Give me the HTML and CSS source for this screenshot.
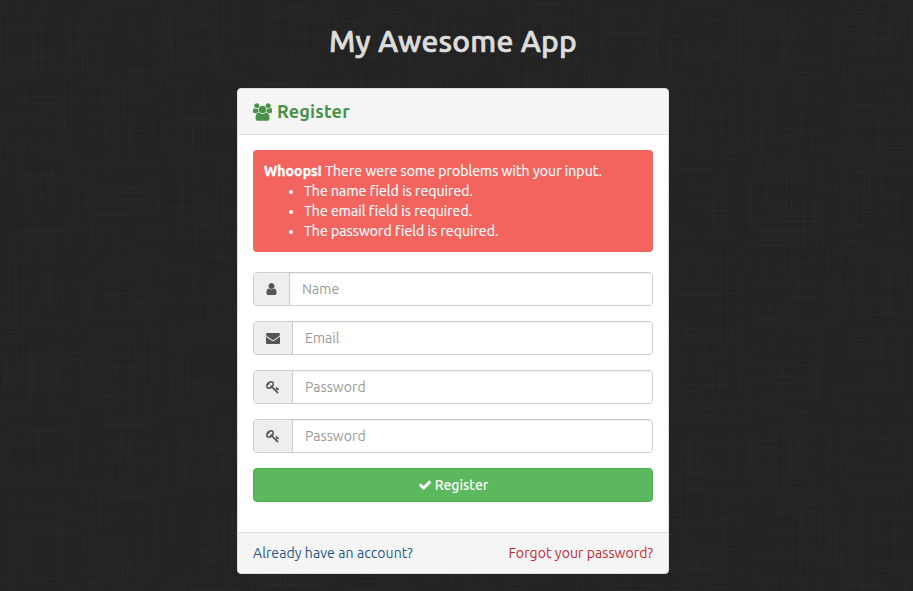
FILE: index.html
```html
<!DOCTYPE html>
<html lang="en">
<head>
<meta charset="utf-8">
<title>My Awesome App</title>
<link rel="stylesheet" href="styles.css">
</head>
<body>
<svg class="texture" aria-hidden="true">
  <filter id="warp" x="0" y="0" width="100%" height="100%" color-interpolation-filters="sRGB">
    <feTurbulence type="fractalNoise" baseFrequency="0.45 0.012" numOctaves="3" seed="4"/>
    <feColorMatrix values="0 0 0 0 1  0 0 0 0 1  0 0 0 0 1  .38 0 0 0 -.16"/>
  </filter>
  <filter id="weft" x="0" y="0" width="100%" height="100%" color-interpolation-filters="sRGB">
    <feTurbulence type="fractalNoise" baseFrequency="0.012 0.45" numOctaves="3" seed="9"/>
    <feColorMatrix values="0 0 0 0 1  0 0 0 0 1  0 0 0 0 1  .38 0 0 0 -.16"/>
  </filter>
  <rect width="100%" height="100%" filter="url(#warp)"/>
  <rect width="100%" height="100%" filter="url(#weft)"/>
</svg>
<svg class="defs" aria-hidden="true">
  <symbol id="users" viewBox="0 0 1920 1792"><path d="M593 896q-162 5-265 128h-134q-82 0-138-40.500t-56-118.500q0-353 124-353 6 0 43.500 21t97.500 42.500 119 21.500q67 0 133-23-5 37-5 66 0 159 93 295zm1071 637q0 120-73 189.500t-194 69.500h-874q-121 0-194-69.500t-73-189.500q0-53 3.500-103.500t14-109 26.500-108.500 43-97.500 62-81 85.500-53.500 111.500-20q10 0 43 21.500t73 48 107 48 135 21.500 135-21.500 107-48 73-48 43-21.500q61 0 111.500 20t85.500 53.500 62 81 43 97.500 26.500 108.500 14 109 3.500 103.500zm-1024-1277q0 106-75 181t-181 75-181-75-75-181 75-181 181-75 181 75 75 181zm704 384q0 159-112.500 271.500t-271.500 112.500-271.500-112.500-112.500-271.500 112.500-271.500 271.500-112.500 271.500 112.500 112.500 271.500zm576 225q0 78-56 118.500t-138 40.500h-134q-103-123-265-128 93-136 93-295 0-29-5-66 66 23 133 23 59 0 119-21.500t97.500-42.500 43.500-21q124 0 124 353zm-128-609q0 106-75 181t-181 75-181-75-75-181 75-181 181-75 181 75 75 181z"/></symbol>
  <symbol id="user" viewBox="256 0 1280 1792"><path d="M1536 1399q0 109-62.500 187t-150.500 78h-854q-88 0-150.500-78t-62.500-187q0-85 8.500-160.500t31.500-152 58.500-131 94-89 134.500-34.500q131 128 313 128t313-128q76 0 134.500 34.500t94 89 58.500 131 31.500 152 8.500 160.500zm-256-887q0 159-112.500 271.500t-271.500 112.500-271.500-112.500-112.500-271.500 112.500-271.500 271.500-112.500 271.500 112.500 112.500 271.500z"/></symbol>
  <symbol id="envelope" viewBox="0 0 1792 1792"><path d="M1792 710v794q0 66-47 113t-113 47h-1472q-66 0-113-47t-47-113v-794q44 49 101 87 362 246 497 345 57 42 92.500 65.500t94.500 48 110 24.500h2q51 0 110-24.500t94.500-48 92.500-65.500q170-123 498-345 57-39 100-87zm0-294q0 79-49 151t-122 123q-376 261-468 325-10 7-42.500 31t-54 38.500-52 32.500-57.500 27-50 9h-2q-23 0-50-9t-57.500-27-52-32.500-54-38.500-42.500-31q-91-64-262-182.500t-205-142.500q-62-42-117-115.500t-55-136.500q0-78 41.500-130t118.500-52h1472q65 0 112.500 47t47.500 113z"/></symbol>
  <symbol id="key" viewBox="0 0 1792 1792"><path d="M832 512q0-80-56-136t-136-56-136 56-56 136q0 42 19 83-41-19-83-19-80 0-136 56t-56 136 56 136 136 56 136-56 56-136q0-42-19-83 41 19 83 19 80 0 136-56t56-136zm851 704q0 17-49 66t-66 49q-9 0-28.500-16t-36.500-33-38.500-40-24.500-26l-96 96 220 220q28 28 28 68 0 42-39 81t-81 39q-40 0-68-28l-671-671q-176 131-365 131-163 0-265.500-102.500t-102.500-265.500q0-160 95-313t248-248 313-95q163 0 265.500 102.500t102.500 265.500q0 189-131 365l355 355 96-96q-3-3-26-24.500t-40-38.500-33-36.500-16-28.500q0-17 49-66t66-49q13 0 23 10 6 6 46 44.500t82 79.500 86.500 86 73 78 28.500 41z"/></symbol>
  <symbol id="check" viewBox="0 0 1792 1792"><path d="M1671 566q0 40-28 68l-724 724-136 136q-28 28-68 28t-68-28l-136-136-362-362q-28-28-28-68t28-68l136-136q28-28 68-28t68 28l294 295 656-657q28-28 68-28t68 28l136 136q28 28 28 68z"/></symbol>
</svg>
<main class="page">
  <h1 class="brand">My Awesome App</h1>
  <section class="panel">
    <header class="panel-head">
      <svg class="icon-users"><use href="#users"/></svg>
      <h2 class="panel-title">Register</h2>
    </header>
    <form class="panel-body">
      <div class="alert">
        <div><strong class="whoops">Whoops!</strong> There were some problems with your input.</div>
        <ul class="errors">
          <li>The name field is required.</li>
          <li>The email field is required.</li>
          <li>The password field is required.</li>
        </ul>
      </div>
      <div class="group">
        <span class="addon"><svg class="icon narrow"><use href="#user"/></svg></span>
        <input class="control" type="text" placeholder="Name">
      </div>
      <div class="group">
        <span class="addon"><svg class="icon"><use href="#envelope"/></svg></span>
        <input class="control" type="text" placeholder="Email">
      </div>
      <div class="group">
        <span class="addon"><svg class="icon"><use href="#key"/></svg></span>
        <input class="control" type="password" placeholder="Password">
      </div>
      <div class="group">
        <span class="addon"><svg class="icon"><use href="#key"/></svg></span>
        <input class="control" type="password" placeholder="Password">
      </div>
      <button class="submit" type="button"><svg class="icon"><use href="#check"/></svg><span>Register</span></button>
    </form>
    <footer class="panel-foot">
      <a class="login">Already have an account?</a>
      <a class="forgot">Forgot your password?</a>
    </footer>
  </section>
</main>
</body>
</html>
```
FILE: styles.css
```css
* { box-sizing: border-box; }
body {
  margin: 0;
  height: 591px;
  overflow: hidden;
  background: #222;
  font: 14px/20px Ubuntu, "Noto Sans", sans-serif;
  color: #333;
}
.texture { position: absolute; inset: 0; width: 100%; height: 100%; opacity: .12; }
.defs { position: absolute; width: 0; height: 0; }
.page {
  position: relative;
  width: 432px;
  margin-left: 237px;
}
.brand {
  margin: 0;
  height: 88px;
  padding-top: 24px;
  text-align: center;
  font-size: 30px;
  line-height: 34px;
  font-weight: 500;
  letter-spacing: .22px;
  -webkit-text-stroke: .7px #ddd;
  color: #ddd;
  white-space: nowrap;
}
.panel {
  height: 486px;
  background: #fff;
  border: 1px solid #ddd;
  border-radius: 4px;
  overflow: hidden;
}
.panel-head {
  display: flex;
  align-items: center;
  gap: 5px;
  height: 46px;
  padding: 0 15px;
  background: #f5f5f5;
  border-bottom: 1px solid #ddd;
  color: #499249;
}
.icon-users { width: 19px; height: 18px; fill: currentColor; }
.panel-title { margin: 0 0 1px; font-size: 18px; line-height: 20px; font-weight: 700; letter-spacing: .2px; }
.panel-body { height: 397px; padding: 15px; }
.alert {
  height: 102px;
  margin-bottom: 20px;
  padding: 11px;
  background: #f4645f;
  border-radius: 4px;
  color: #fff;
  letter-spacing: .08px;
  -webkit-text-stroke: .2px #fff;
  white-space: nowrap;
}
.whoops { font-weight: 700; letter-spacing: .1px; -webkit-text-stroke: .35px #fff; }
.errors { margin: 0; padding-left: 40px; }
.group {
  display: flex;
  height: 34px;
  margin-bottom: 15px;
  border: 1px solid #ccc;
  border-radius: 4px;
  overflow: hidden;
}
.addon {
  display: flex;
  align-items: center;
  padding: 0 12px;
  background: #eee;
  border-right: 1px solid #ccc;
  color: #555;
}
.icon { width: 14px; height: 14px; fill: currentColor; flex: none; }
.narrow { width: 11px; }
.control {
  flex: 1;
  min-width: 0;
  border: 0;
  padding: 0 12px;
  background: #fff;
  box-shadow: inset 0 1px 1px rgba(0, 0, 0, .075);
  font: inherit;
  letter-spacing: .07px;
}
.control::placeholder { color: #999; opacity: 1; }
.submit {
  display: flex;
  align-items: center;
  justify-content: center;
  gap: 3px;
  width: 100%;
  height: 34px;
  padding: 0;
  background: #5cb85c;
  border: 1px solid #4cae4c;
  border-radius: 4px;
  color: #fff;
  font: inherit;
  font-weight: 500;
}
.panel-foot {
  display: flex;
  align-items: center;
  justify-content: space-between;
  height: 41px;
  padding: 0 15px;
  background: #f5f5f5;
  border-top: 1px solid #ddd;
  letter-spacing: .09px;
  white-space: nowrap;
}
.login { color: #205588; }
.forgot { color: #c52530; }
```
